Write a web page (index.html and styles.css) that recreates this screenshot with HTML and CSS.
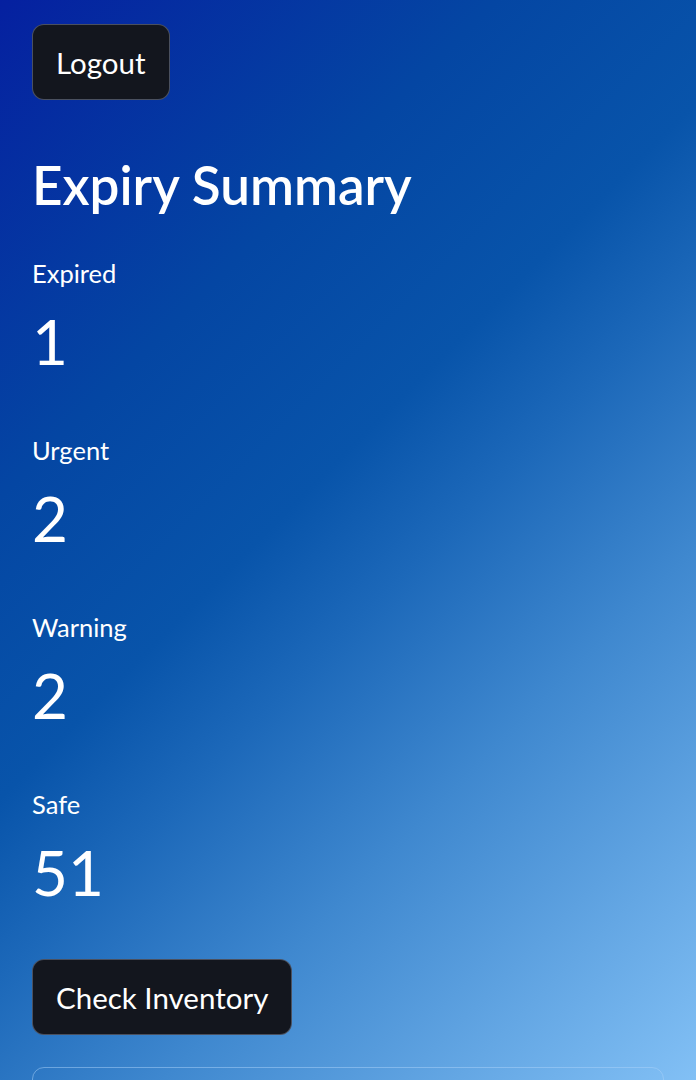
FILE: index.html
```html
<!DOCTYPE html>
<html>
<head>
<meta charset="utf-8">
<link rel="stylesheet" href="styles.css">
</head>
<body>
<div class="app">
  <main class="main">
    <button class="btn">Logout</button>
    <h2 class="title">Expiry Summary</h2>
    <div class="metrics">
      <div class="metric"><div class="metric-label">Expired</div><div class="metric-value">1</div></div>
      <div class="metric"><div class="metric-label">Urgent</div><div class="metric-value">2</div></div>
      <div class="metric"><div class="metric-label">Warning</div><div class="metric-value">2</div></div>
      <div class="metric"><div class="metric-label">Safe</div><div class="metric-value">51</div></div>
    </div>
    <button class="btn">Check Inventory</button>
    <div class="panel"></div>
  </main>
</div>
</body>
</html>
```
FILE: styles.css
```css
html, body {
  margin: 0;
  padding: 0;
}
body {
  font-family: "Lato", "Open Sans", sans-serif;
  color: #ffffff;
}
.app {
  min-height: 1080px;
  height: 1080px;
  overflow: hidden;
  background: linear-gradient(135deg, #0520a0 0%, #0446a3 28%, #0854aa 45%, #1c68b9 55%, #3f88cf 70%, #82c0f5 100%);
}
.main {
  display: flex;
  flex-direction: column;
  align-items: flex-start;
  padding: 24px 32px 0;
}
.btn {
  height: 76px;
  padding: 0 23px;
  border-radius: 12px;
  border: 1px solid rgba(120, 130, 150, 0.55);
  background: #13161e;
  color: #ffffff;
  font-family: inherit;
  font-size: 29.5px;
}
.title {
  margin: 53px 0 0;
  font-size: 53px;
  font-weight: 600;
  line-height: 64px;
}
.metrics {
  display: flex;
  flex-direction: column;
  margin-top: 34px;
}
.metric {
  height: 177px;
}
.metric-label {
  font-size: 25.5px;
  line-height: 44px;
}
.metric-value {
  margin-top: 6px;
  font-size: 62px;
  line-height: 80px;
}
.panel {
  margin-top: 32px;
  width: 632px;
  height: 100px;
  border: 1px solid rgba(170, 210, 250, 0.5);
  border-radius: 12px;
  box-sizing: border-box;
}
```
